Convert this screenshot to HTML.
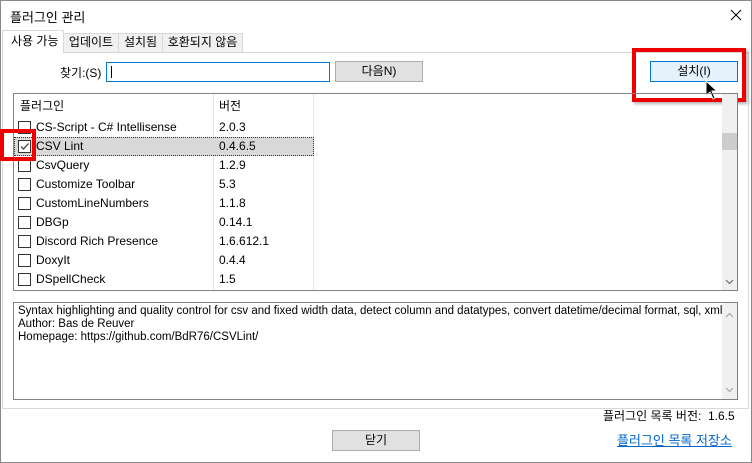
<!DOCTYPE html>
<html><head><meta charset="utf-8"><style>
*{box-sizing:border-box;margin:0;padding:0}
body{width:752px;height:463px;background:#fff;font-family:"Liberation Sans","Noto Sans CJK KR",sans-serif;font-size:12px;color:#000;position:relative;overflow:hidden}
.a{position:absolute}
.win{left:0;top:0;width:752px;height:463px;border:1px solid #888}
.tab{top:33px;height:19px;border:1px solid #d9d9d9;border-bottom:none;background:#f0f0f0;text-align:center;line-height:17px}
.btn{border:1px solid #adadad;background:#e1e1e1;text-align:center;line-height:18px}
.row{left:14px;width:300px;height:19px;line-height:19px}
.cb{position:absolute;left:4px;top:3px;width:13px;height:13px;border:1px solid #333;background:#fff}
.nm{position:absolute;left:22px}
.vr{position:absolute;left:205px}
</style></head><body>
<div class="a win"></div>
<div class="a" style="left:10px;top:7px;font-size:13px">플러그인 관리</div>
<svg class="a" style="left:730px;top:9px" width="12" height="12"><path d="M1 1L11 11M11 1L1 11" stroke="#000" stroke-width="1"/></svg>
<div class="a" style="left:2px;top:52px;width:747px;height:357px;border:1px solid #d9d9d9"></div>
<div class="a tab" style="left:63px;width:56px">업데이트</div>
<div class="a tab" style="left:118px;width:45px">설치됨</div>
<div class="a tab" style="left:162px;width:81px">호환되지 않음</div>
<div class="a" style="left:2px;top:30px;width:62px;height:23px;border:1px solid #d9d9d9;border-bottom:none;background:#fff;line-height:20px;padding-left:8px">사용 가능</div>
<div class="a" style="left:60px;top:64px">찾기:(S)</div>
<div class="a" style="left:106px;top:62px;width:224px;height:20px;border:1px solid #0078d7;background:#fff"><div class="a" style="left:4px;top:3px;width:1px;height:12px;background:#000"></div></div>
<div class="a btn" style="left:335px;top:61px;width:88px;height:21px">다음N)</div>
<div class="a" style="left:632px;top:48px;width:114px;height:54px;border:4px solid #e00;box-shadow:2px 2px 3px rgba(0,0,0,.3)"></div>
<div class="a btn" style="left:650px;top:61px;width:88px;height:21px;border-color:#0078d7;background:#e5f1fb">설치(I)</div>
<svg class="a" style="left:705px;top:80px" width="14" height="20"><path d="M1 1 L1 16 L5 12 L8 19 L10 18 L7 11 L12 11 Z" fill="#000" stroke="#fff" stroke-width="1"/></svg>
<div class="a" style="left:13px;top:93px;width:725px;height:198px;border:1px solid #828282"></div>
<div class="a" style="left:213px;top:94px;width:1px;height:196px;background:#e5e5e5"></div>
<div class="a" style="left:313px;top:94px;width:1px;height:196px;background:#e5e5e5"></div>
<div class="a" style="left:20px;top:97px">플러그인</div>
<div class="a" style="left:219px;top:97px">버전</div>
<div class="a" style="left:722px;top:94px;width:15px;height:196px;background:#f0f0f0"></div>
<div class="a" style="left:722px;top:133px;width:15px;height:17px;background:#cdcdcd"></div>
<svg class="a" style="left:725px;top:279px" width="9" height="6"><path d="M1 1L4.5 4.5L8 1" stroke="#606060" fill="none"/></svg>
<div class="a row" style="top:118px"><div class="cb"></div><span class="nm">CS-Script - C# Intellisense</span><span class="vr">2.0.3</span></div>
<div class="a row" style="top:137px;background:#d9d9d9;border:1px dotted #333"><div class="cb" style="left:3px;top:2px"><svg width="11" height="11" style="position:absolute;left:0;top:0"><path d="M2 5.5 L4.5 8 L9.5 2.5" stroke="#333" fill="none" stroke-width="1.2"/></svg></div><span class="nm" style="left:21px;top:-1px;position:absolute">CSV Lint</span><span class="vr" style="left:204px;top:-1px;position:absolute">0.4.6.5</span></div>
<div class="a row" style="top:156px"><div class="cb"></div><span class="nm">CsvQuery</span><span class="vr">1.2.9</span></div>
<div class="a row" style="top:175px"><div class="cb"></div><span class="nm">Customize Toolbar</span><span class="vr">5.3</span></div>
<div class="a row" style="top:194px"><div class="cb"></div><span class="nm">CustomLineNumbers</span><span class="vr">1.1.8</span></div>
<div class="a row" style="top:213px"><div class="cb"></div><span class="nm">DBGp</span><span class="vr">0.14.1</span></div>
<div class="a row" style="top:232px"><div class="cb"></div><span class="nm">Discord Rich Presence</span><span class="vr">1.6.612.1</span></div>
<div class="a row" style="top:251px"><div class="cb"></div><span class="nm">DoxyIt</span><span class="vr">0.4.4</span></div>
<div class="a row" style="top:270px"><div class="cb"></div><span class="nm">DSpellCheck</span><span class="vr">1.5</span></div>
<div class="a" style="left:0px;top:129px;width:36px;height:32px;border:4px solid #e00"></div>
<div class="a" style="left:13px;top:302px;width:725px;height:98px;border:1px solid #828282"></div>
<div class="a" style="left:722px;top:303px;width:15px;height:96px;background:#f0f0f0"></div>
<svg class="a" style="left:725px;top:312px" width="9" height="6"><path d="M1 5L4.5 1.5L8 5" stroke="#a0a0a0" fill="none"/></svg>
<svg class="a" style="left:725px;top:387px" width="9" height="6"><path d="M1 1L4.5 4.5L8 1" stroke="#a0a0a0" fill="none"/></svg>
<div class="a" style="left:18px;top:305px;font-size:11.5px;line-height:13px;white-space:nowrap">Syntax highlighting and quality control for csv and fixed width data, detect column and datatypes, convert datetime/decimal format, sql, xml<br>Author: Bas de Reuver<br>Homepage: https://github.com/BdR76/CSVLint/</div>
<div class="a" style="left:603px;top:407px">플러그인 목록 버전:&nbsp; 1.6.5</div>
<div class="a btn" style="left:332px;top:430px;width:88px;height:21px">닫기</div>
<div class="a" style="left:617px;top:430px;color:#0066cc;text-decoration:underline;font-size:13px">플러그인 목록 저장소</div>
</body></html>
